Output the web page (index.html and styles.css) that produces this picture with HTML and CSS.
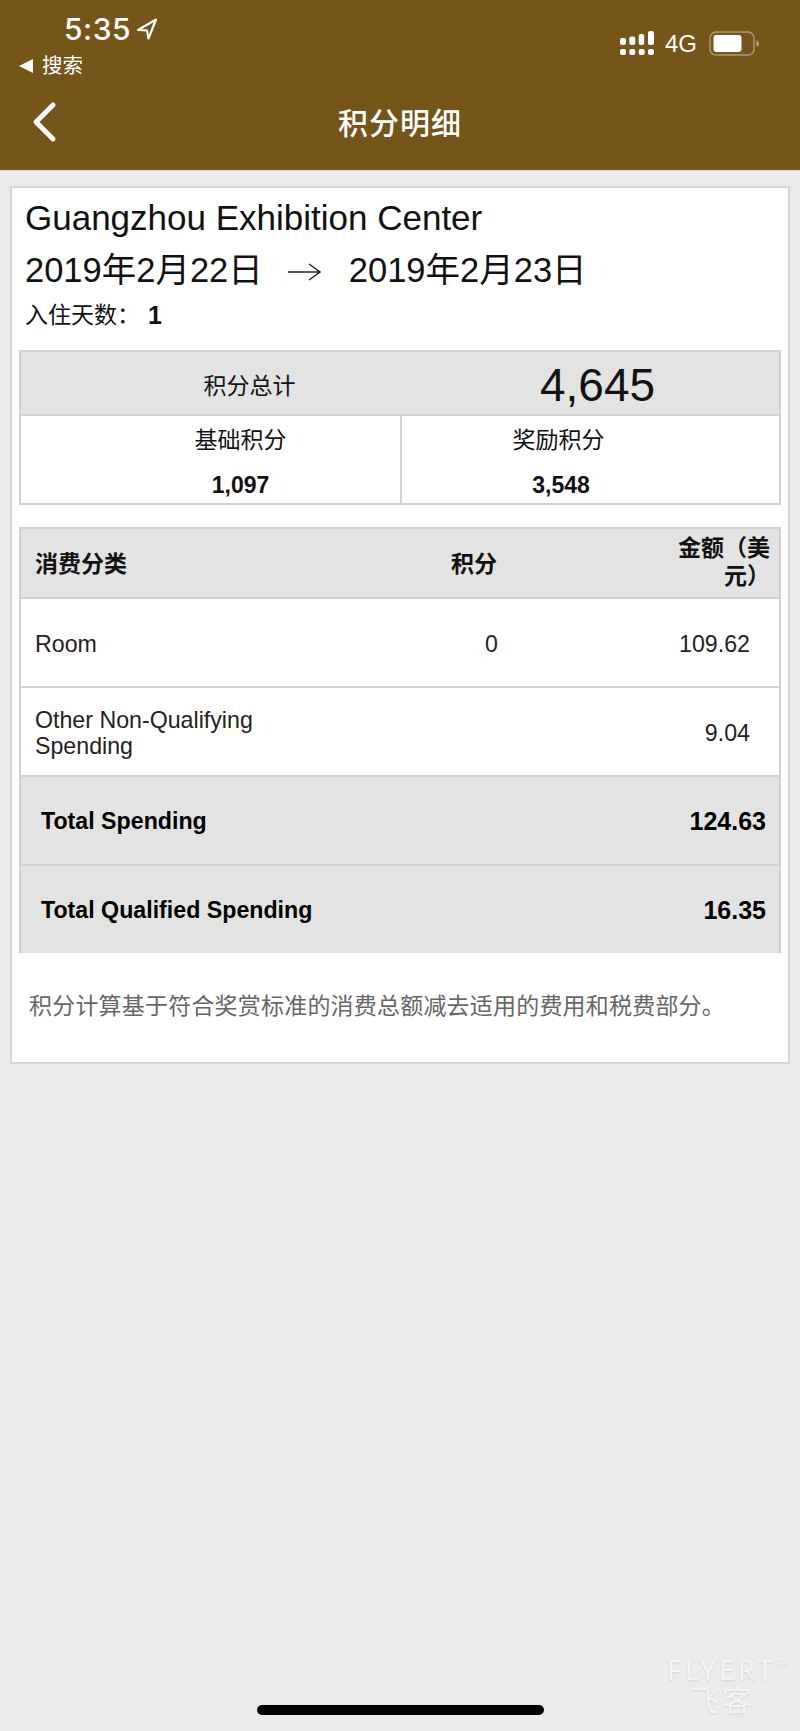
FILE: index.html
```html
<!DOCTYPE html>
<html lang="zh">
<head>
<meta charset="utf-8">
<title>积分明细</title>
<link rel="stylesheet" href="styles.css">
</head>
<body>
<header class="app-header">
  <div class="status-bar">
    <div class="status-left">
      <div class="clock">
        <span class="time">5:35</span>
        <svg class="location" width="22" height="22" viewBox="0 0 22 22" aria-hidden="true">
          <path d="M20 1.500 L2 12 L11 12.500 L12.500 20.500 Z" fill="none" stroke="#fff" stroke-width="2.200" stroke-linejoin="round"/>
        </svg>
      </div>
      <div class="back-app"><span class="back-triangle"></span><span>搜索</span></div>
    </div>
    <div class="status-right">
      <svg class="signal" width="34" height="24" viewBox="0 0 34 24" aria-hidden="true">
        <g fill="#fff">
          <rect x="0" y="7" width="6" height="7" rx="2"/>
          <rect x="9.300" y="5.500" width="6" height="8.500" rx="2"/>
          <rect x="18.700" y="3" width="5.500" height="11" rx="2"/>
          <rect x="28" y="0" width="6" height="14" rx="2"/>
          <rect x="0" y="18" width="6" height="6" rx="2"/>
          <rect x="9.300" y="18" width="6" height="6" rx="2"/>
          <rect x="18.700" y="18" width="6" height="6" rx="2"/>
          <rect x="28" y="18" width="6" height="6" rx="2"/>
        </g>
      </svg>
      <span class="network">4G</span>
      <svg class="battery" width="51" height="26" viewBox="0 0 51 26" aria-hidden="true">
        <rect x="1" y="1" width="44" height="23" rx="6" fill="none" stroke="#fff" stroke-opacity=".4" stroke-width="1.500"/>
        <rect x="4.500" y="4" width="28" height="17" rx="3" fill="#fff"/>
        <path d="M47.500 9 Q50 10.500 50 12.500 Q50 14.500 47.500 16 Z" fill="#fff" fill-opacity=".5"/>
      </svg>
    </div>
  </div>
  <nav class="nav-bar">
    <svg class="nav-back" width="26" height="42" viewBox="0 0 26 42" aria-hidden="true">
      <path d="M21 4 L4 21 L21 38" fill="none" stroke="#fff" stroke-width="5" stroke-linecap="round" stroke-linejoin="round"/>
    </svg>
    <h1 class="nav-title">积分明细</h1>
  </nav>
</header>

<main class="card">
  <h2 class="hotel">Guangzhou Exhibition Center</h2>
  <p class="stay-dates">
    <span>2019年2月22日</span>
    <svg class="stay-arrow" width="33" height="20" viewBox="0 0 33 20" aria-hidden="true">
      <path d="M0 10 H32 M21 2 L32 10 L21 18" fill="none" stroke="#222" stroke-width="1.500"/>
    </svg>
    <span>2019年2月23日</span>
  </p>
  <p class="nights"><span>入住天数：</span><strong>1</strong></p>

  <section class="summary">
    <div class="summary-head">
      <div class="summary-label">积分总计</div>
      <div class="summary-total">4,645</div>
    </div>
    <div class="summary-split">
      <div class="split-cell split-base">
        <div class="split-label">基础积分</div>
        <div class="split-value">1,097</div>
      </div>
      <div class="split-cell split-bonus">
        <div class="split-label">奖励积分</div>
        <div class="split-value">3,548</div>
      </div>
    </div>
  </section>

  <section class="spend">
    <div class="row row-head">
      <div class="col-name">消费分类</div>
      <div class="col-points">积分</div>
      <div class="col-amount"><span class="amount-title">金额（美元）</span></div>
    </div>
    <div class="row row-item">
      <div class="col-name">Room</div>
      <div class="col-points">0</div>
      <div class="col-amount">109.62</div>
    </div>
    <div class="row row-item">
      <div class="col-name col-wrap">Other Non-Qualifying Spending</div>
      <div class="col-points"></div>
      <div class="col-amount">9.04</div>
    </div>
    <div class="row row-total">
      <div>Total Spending</div>
      <div class="total-value">124.63</div>
    </div>
    <div class="row row-total row-last">
      <div>Total Qualified Spending</div>
      <div class="total-value">16.35</div>
    </div>
  </section>

  <p class="note">积分计算基于符合奖赏标准的消费总额减去适用的费用和税费部分。</p>
</main>

<div class="watermark">
  <span class="wm-latin">FLYERT<sup>+</sup></span>
  <span class="wm-cjk">飞客</span>
</div>
<div class="home-indicator"></div>
</body>
</html>
```

FILE: styles.css
```css
* {
  box-sizing: border-box;
}

html,
body {
  margin: 0;
  padding: 0;
}

body {
  position: relative;
  height: 1731px;
  overflow: hidden;
  background: #ebebeb;
  color: #111;
  font-family: "Liberation Sans", "Noto Sans CJK SC", sans-serif;
}

/* Brown app header with the phone status bar */
.app-header {
  height: 171px;
  background: #75551a;
  border-bottom: 1px solid #d8d6d0;
  color: #fff;
}

.status-bar {
  display: flex;
  justify-content: space-between;
  height: 84px;
  padding: 12px 40px 0 19px;
}

.clock {
  display: flex;
  align-items: center;
  gap: 5px;
  height: 35px;
  padding-left: 45px;
}

.time {
  font-family: Inter, "Liberation Sans", sans-serif;
  font-size: 30px;
  font-weight: 500;
  line-height: 35px;
  letter-spacing: .5px;
}

.location {
  margin-top: -2px;
}

.back-app {
  display: flex;
  align-items: center;
  gap: 9px;
  height: 30px;
  margin-top: 4px;
  font-size: 20.500px;
  line-height: 30px;
}

.back-triangle {
  width: 14px;
  height: 14px;
  background: #fff;
  clip-path: polygon(100% 0, 100% 100%, 0 50%);
}

.status-right {
  display: flex;
  align-items: flex-start;
  gap: 11px;
  padding-top: 19px;
}

.network {
  font-size: 24px;
  line-height: 26px;
}

.battery {
  margin-left: 1px;
}

.nav-bar {
  position: relative;
  display: flex;
  align-items: center;
  justify-content: center;
  height: 80px;
}

.nav-back {
  position: absolute;
  left: 32px;
  top: 17px;
}

.nav-title {
  margin: 0;
  font-size: 30px;
  font-weight: 500;
  line-height: 78px;
  letter-spacing: 1px;
}

/* White detail card */
.card {
  height: 878px;
  margin: 15px 10px 0;
  padding: 0 7px;
  background: #fff;
  border: 2px solid #d6d6d6;
}

.hotel {
  height: 58px;
  margin: 0;
  padding: 10px 0 0 6px;
  font-size: 35px;
  font-weight: 400;
  line-height: 40px;
}

.stay-dates {
  display: flex;
  align-items: center;
  gap: 25px;
  height: 48px;
  margin: 0;
  padding-left: 6px;
  font-size: 34.500px;
  line-height: 48px;
}

.stay-arrow {
  margin: 4px 3px 0 0;
}

.nights {
  display: flex;
  align-items: center;
  height: 30px;
  margin: 6px 0 20px;
  padding-left: 6px;
  font-size: 23px;
  line-height: 30px;
}

.nights strong {
  margin-left: 8px;
  font-size: 25px;
}

/* Points summary box */
.summary {
  border: 2px solid #d2d2d2;
}

.summary-head {
  display: grid;
  grid-template-columns: 1fr 1fr;
  align-items: center;
  height: 64px;
  text-align: center;
  background: #e3e3e3;
  border-bottom: 2px solid #d2d2d2;
}

.summary-label {
  padding-left: 78px;
  font-size: 23px;
}

.summary-total {
  margin-top: 3px;
  padding-left: 16px;
  font-size: 46px;
  line-height: 60px;
}

.summary-split {
  display: grid;
  grid-template-columns: 381px 1fr;
  height: 87px;
}

.split-cell {
  padding-top: 7px;
  text-align: center;
}

.split-base {
  padding-left: 60px;
  border-right: 2px solid #d2d2d2;
}

.split-bonus {
  padding-right: 64px;
}

.split-label {
  font-size: 23px;
  line-height: 34px;
}

.split-value {
  margin-top: 11px;
  font-size: 23px;
  font-weight: 700;
  line-height: 34px;
}

.split-bonus .split-value {
  padding-left: 5px;
}

/* Spending table */
.spend {
  margin-top: 22px;
  border: solid #d2d2d2;
  border-width: 2px 2px 0;
}

.row {
  display: grid;
  grid-template-columns: 1fr 100px 277px;
  align-items: center;
  font-size: 23.200px;
  border-bottom: 2px solid #d2d2d2;
}

.row-head {
  height: 70px;
  padding-bottom: 2px;
  background: #e3e3e3;
  font-size: 23px;
  font-weight: 700;
}

.row-item {
  height: 89px;
  padding-top: 3px;
  background: #fff;
  color: #222;
}

.col-name {
  padding-left: 14px;
}

.col-wrap {
  max-width: 270px;
  line-height: 26px;
}

.col-points {
  padding-right: 4px;
  text-align: right;
}

.col-amount {
  padding-right: 29px;
  text-align: right;
}

.row-head .col-amount {
  padding-right: 9px;
  line-height: 28px;
}

.row-head .col-points {
  padding-right: 5px;
}

.amount-title {
  display: inline-block;
  max-width: 96px;
}

.row-total {
  grid-template-columns: 1fr auto;
  height: 89px;
  padding: 1px 13px 0 20px;
  background: #e3e3e3;
  color: #000;
  font-weight: 700;
}

.total-value {
  font-size: 25px;
}

.row-last {
  height: 87px;
  border-bottom: 0;
}

.note {
  margin: 36px 0 0;
  padding-left: 10px;
  color: #666;
  font-size: 23px;
  line-height: 34px;
  letter-spacing: .2px;
}

/* Faint site mark in the lower corner */
.watermark {
  position: absolute;
  left: 667px;
  top: 1656px;
  display: flex;
  flex-direction: column;
  align-items: flex-start;
  color: #f3f3f3;
  text-shadow: 0 1px 2px rgba(0, 0, 0, .1);
}

.wm-latin {
  font-family: Lato, "Liberation Sans", sans-serif;
  font-size: 27px;
  font-weight: 400;
  line-height: 28px;
  letter-spacing: 3px;
}

.wm-latin sup {
  font-size: 20px;
  line-height: 0;
}

.wm-cjk {
  margin-left: 22px;
  font-size: 30px;
  line-height: 34px;
  letter-spacing: 3px;
}

.home-indicator {
  position: absolute;
  left: 257px;
  top: 1705px;
  width: 287px;
  height: 10px;
  border-radius: 5px;
  background: #000;
}
```
